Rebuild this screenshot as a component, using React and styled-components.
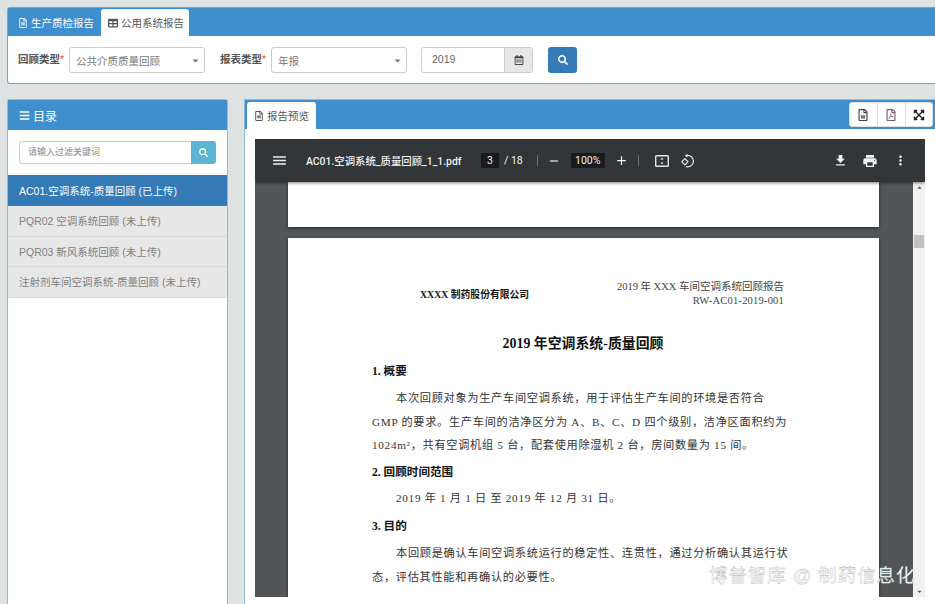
import styled, { createGlobalStyle } from "styled-components";
import {
  FaBars,
  FaExpandArrowsAlt,
  FaRegCalendarAlt,
  FaRegFileAlt,
  FaRegFilePdf,
  FaRegFileWord,
  FaSearch,
  FaTable,
  FaCaretDown,
  FaCaretUp,
} from "react-icons/fa";
import { MdAdd, MdFileDownload, MdMenu, MdMoreVert, MdPrint, MdRemove } from "react-icons/md";

const uiFont = `"Liberation Sans", "Noto Sans CJK SC", sans-serif`;
const docFont = `"Liberation Serif", "Noto Sans CJK SC", serif`;

const GlobalStyle = createGlobalStyle`
  html, body {
    margin: 0;
    height: 604px;
    overflow: hidden;
    background: #dfe2e2;
  }
  * { box-sizing: border-box; }
`;

const Page = styled.div`
  width: 935px;
  height: 604px;
  padding-top: 7px;
  display: flex;
  flex-direction: column;
  gap: 15px;
  font-family: ${uiFont};
  position: relative;
  overflow: hidden;
`;

const TopPanel = styled.section`
  margin-left: 7px;
  height: 77px;
  background: #fff;
  border: 1px solid #6fa8d8;
  border-right: 0;
  border-radius: 3px 0 0 3px;
  flex-shrink: 0;
`;

const TabBar = styled.div`
  background: #3f8fcf;
  height: ${(p) => p.$h || 28}px;
  flex-shrink: 0;
  display: flex;
  align-items: flex-end;
  padding-left: ${(p) => p.$pad || 0}px;
  position: relative;
`;

const Tab = styled.div`
  height: ${(p) => p.$h || 27}px;
  padding: 0 ${(p) => p.$pr}px 0 ${(p) => p.$pl}px;
  display: flex;
  align-items: center;
  gap: 3px;
  font-size: 10.5px;
  white-space: nowrap;
  border-radius: 3px 3px 0 0;
  color: ${(p) => (p.$active ? "#555" : "#fff")};
  background: ${(p) => (p.$active ? "#fff" : "transparent")};
  svg { font-size: 10px; color: ${(p) => (p.$active ? "#555" : "#e8f2fa")}; }
`;

const FilterRow = styled.div`
  display: flex;
  align-items: center;
  padding: 11px 0 0 10px;
`;

const Label = styled.label`
  width: 51px;
  margin-top: -3px;
  font-size: 10.5px;
  color: #555;
  font-weight: 700;
  white-space: nowrap;
  span { color: #d9534f; font-weight: 400; }
`;

const Select = styled.div`
  width: 136px;
  height: 26px;
  margin-right: 15px;
  padding: 0 4px 0 6px;
  display: flex;
  align-items: center;
  justify-content: space-between;
  font-size: 10.5px;
  color: #777;
  background: #fff;
  border: 1px solid #ccc;
  border-radius: 3px;
  svg { font-size: 9px; color: #777; }
`;

const DateGroup = styled.div`
  width: 112px;
  height: 26px;
  margin-left: -1px;
  margin-right: 15px;
  display: flex;
  border: 1px solid #ccc;
  border-radius: 3px;
  overflow: hidden;
`;

const DateValue = styled.div`
  flex: 1;
  padding-left: 10px;
  font-size: 10.5px;
  line-height: 23px;
  color: #666;
`;

const DateAddon = styled.div`
  width: 28px;
  display: flex;
  align-items: center;
  justify-content: center;
  background: #e6e6e6;
  border-left: 1px solid #ccc;
  color: #444;
  font-size: 10px;
`;

const SearchButton = styled.button`
  width: 29px;
  height: 26px;
  padding: 0;
  border: 0;
  border-radius: 3px;
  background: #337ab7;
  color: #fff;
  font-size: 10px;
  display: flex;
  align-items: center;
  justify-content: center;
`;

const Columns = styled.div`
  flex: 1;
  min-height: 0;
  display: flex;
  gap: 16px;
  padding-left: 7px;
`;

const Sidebar = styled.aside`
  width: 221px;
  flex-shrink: 0;
  background: #fff;
  border: 1px solid #8fbbdf;
  border-bottom: 0;
  border-radius: 3px 3px 0 0;
`;

const SideHeader = styled.div`
  height: 30px;
  padding-left: 11px;
  display: flex;
  align-items: center;
  gap: 3px;
  background: #3f8fcf;
  color: #fff;
  font-size: 12px;
  svg { font-size: 11px; }
`;

const FilterBox = styled.div`
  height: 45px;
  padding: 11px 11px 0;
  display: flex;
`;

const FilterInput = styled.div`
  flex: 1;
  height: 23px;
  padding-left: 8px;
  font-size: 9px;
  line-height: 21px;
  color: #888;
  border: 1px solid #ccc;
  border-right: 0;
  border-radius: 3px 0 0 3px;
`;

const FilterButton = styled.div`
  width: 25px;
  height: 23px;
  display: flex;
  align-items: center;
  justify-content: center;
  background: #5bb5d0;
  color: #fff;
  font-size: 9px;
  border-radius: 0 3px 3px 0;
`;

const Item = styled.div`
  height: ${(p) => (p.$active ? 31 : 30.5)}px;
  padding-left: 11px;
  display: flex;
  align-items: center;
  font-size: 10.5px;
  white-space: nowrap;
  color: ${(p) => (p.$active ? "#fff" : "#808080")};
  background: ${(p) => (p.$active ? "#337ab7" : "#e7e7e7")};
  border-bottom: 1px solid ${(p) => (p.$active ? "#337ab7" : "#d8d8d8")};
`;

const Preview = styled.main`
  flex: 1;
  min-width: 0;
  background: #fff;
  border-left: 1px solid #8fbbdf;
  border-top: 1px solid #8fbbdf;
  display: flex;
  flex-direction: column;
`;

const ButtonGroup = styled.div`
  position: absolute;
  right: 2px;
  top: 2px;
  display: flex;
  background: #fff;
  border-radius: 3px;
  border: 1px solid #ddd;
`;

const ToolButton = styled.div`
  width: 27.5px;
  height: 23px;
  display: flex;
  align-items: center;
  justify-content: center;
  font-size: 12px;
  color: ${(p) => p.$color || "#222"};
  & + & { border-left: 1px solid #ddd; }
`;

const Viewer = styled.div`
  margin: 10px 10px 0;
  height: 458px;
  display: flex;
  flex-direction: column;
  overflow: hidden;
`;

const PdfBar = styled.div`
  height: 43px;
  flex-shrink: 0;
  padding: 0 17px 0 16px;
  display: flex;
  align-items: center;
  background: #323639;
  color: #f1f1f1;
  box-shadow: 0 1px 3px rgba(0, 0, 0, 0.5);
  position: relative;
  z-index: 1;
  font-family: Roboto, "Noto Sans CJK SC", sans-serif;
  font-size: 10.5px;
  svg { display: block; flex-shrink: 0; }
`;

const FileName = styled.div`
  width: 175px;
  margin-left: 18px;
  font-size: 10.4px;
  font-weight: 500;
  white-space: nowrap;
`;

const NumBox = styled.div`
  width: ${(p) => p.$w}px;
  height: 15px;
  margin: 0 ${(p) => p.$mr || 0}px 0 ${(p) => p.$ml || 0}px;
  line-height: 15px;
  text-align: center;
  background: #191b1c;
`;

const PageTotal = styled.span`
  margin-left: 5px;
  white-space: nowrap;
`;

const Sep = styled.div`
  width: 1px;
  height: 11px;
  margin: 0 ${(p) => p.$mr}px 0 ${(p) => p.$ml}px;
  background: #6b6e70;
`;

const Gap = styled.div`
  width: ${(p) => p.$w}px;
  flex-shrink: 0;
`;

const Spacer = styled.div`
  flex: 1;
`;

const PdfBody = styled.div`
  flex: 1;
  min-height: 0;
  display: flex;
`;

const PageArea = styled.div`
  flex: 1;
  min-width: 0;
  padding-right: 1px;
  background: #525659;
  overflow: hidden;
  display: flex;
  flex-direction: column;
  align-items: center;
  gap: 11px;
`;

const Sheet = styled.div`
  width: 591px;
  flex-shrink: 0;
  height: ${(p) => p.$h}px;
  background: #fff;
  box-shadow: 0 1px 3px rgba(0, 0, 0, 0.5);
  padding: ${(p) => (p.$doc ? "42px 95px 0 84px" : 0)};
  font-family: ${docFont};
  color: #222;
`;

const DocHead = styled.div`
  display: flex;
  justify-content: space-between;
  align-items: center;
`;

const Company = styled.div`
  margin-left: 48px;
  font-size: 9.8px;
  font-weight: 700;
  color: #111;
`;

const DocMeta = styled.div`
  text-align: right;
  font-size: 10.5px;
  line-height: 14px;
  color: #444;
`;

const DocCode = styled.span`
  letter-spacing: 0.2px;
`;

const DocTitle = styled.h1`
  margin: 27px 0 0 10px;
  height: 18px;
  text-align: center;
  font-size: 13.9px;
  line-height: 18px;
  color: #111;
`;

const Heading = styled.h2`
  margin: ${(p) => p.$mt}px 0 0;
  font-size: 11.6px;
  line-height: 16px;
  color: #111;
`;

const DocLine = styled.div`
  margin-top: ${(p) => p.$mt || 0}px;
  padding-left: ${(p) => (p.$indent ? 24 : 0)}px;
  height: 23.5px;
  font-size: 11.2px;
  line-height: 23.5px;
  letter-spacing: 0.7px;
  white-space: nowrap;
  color: #333;
`;

const Scrollbar = styled.div`
  width: 12px;
  flex-shrink: 0;
  background: #f1f1f1;
  display: flex;
  flex-direction: column;
  align-items: center;
  justify-content: space-between;
  position: relative;
  padding: 2px 0;
  color: #555;
  font-size: 7px;
`;

const Thumb = styled.div`
  position: absolute;
  top: 53px;
  left: 1px;
  width: 10px;
  height: 13px;
  background: #c1c1c1;
`;

const Watermark = styled.div`
  position: absolute;
  left: 709px;
  top: 564px;
  font-size: 18.5px;
  line-height: 24px;
  letter-spacing: 0.9px;
  color: #fff;
  white-space: nowrap;
  -webkit-text-stroke: 0.3px #a6a6a6;
`;

const FitIcon = () => (
  <svg width="14" height="12" viewBox="0 0 14 12" fill="none">
    <rect x="0.7" y="0.7" width="12.6" height="10.6" rx="0.8" stroke="#e4e4e4" strokeWidth="1.4" />
    <path d="M7 2.6 8.6 4.6H5.4zM7 9.4 8.6 7.4H5.4z" fill="#e4e4e4" />
  </svg>
);

const RotateIcon = () => (
  <svg width="14" height="14" viewBox="0 0 14 14" fill="none" stroke="#e8e8e8" strokeWidth="1.2">
    <path d="M5.5 1.6A5.7 5.7 0 1 1 5 12.6" />
    <path d="M6.4 0 3.8 1.8 6.4 3.6" fill="#e8e8e8" stroke="none" />
    <path d="M3.9 4.7 7 7.8 3.9 10.9 0.8 7.8z" />
  </svg>
);

export default function App() {
  return (
    <>
      <GlobalStyle />
      <Page>
        <TopPanel>
          <TabBar>
            <Tab $pl={10} $pr={7}>
              <FaRegFileAlt />
              生产质检报告
            </Tab>
            <Tab $active $pl={7} $pr={5}>
              <FaTable />
              公用系统报告
            </Tab>
          </TabBar>
          <FilterRow>
            <Label>
              回顾类型<span>*</span>
            </Label>
            <Select>
              公共介质质量回顾
              <FaCaretDown />
            </Select>
            <Label>
              报表类型<span>*</span>
            </Label>
            <Select>
              年报
              <FaCaretDown />
            </Select>
            <DateGroup>
              <DateValue>2019</DateValue>
              <DateAddon>
                <FaRegCalendarAlt />
              </DateAddon>
            </DateGroup>
            <SearchButton>
              <FaSearch />
            </SearchButton>
          </FilterRow>
        </TopPanel>

        <Columns>
          <Sidebar>
            <SideHeader>
              <FaBars />
              目录
            </SideHeader>
            <FilterBox>
              <FilterInput>请输入过滤关键词</FilterInput>
              <FilterButton>
                <FaSearch />
              </FilterButton>
            </FilterBox>
            <Item $active>AC01.空调系统-质量回顾 (已上传)</Item>
            <Item>PQR02 空调系统回顾 (未上传)</Item>
            <Item>PQR03 新风系统回顾 (未上传)</Item>
            <Item>注射剂车间空调系统-质量回顾 (未上传)</Item>
          </Sidebar>

          <Preview>
            <TabBar $pad={2} $h={29}>
              <Tab $active $pl={7} $pr={7}>
                <FaRegFileAlt />
                报告预览
              </Tab>
              <ButtonGroup>
                <ToolButton $color="#444">
                  <FaRegFileWord />
                </ToolButton>
                <ToolButton $color="#7a5a70">
                  <FaRegFilePdf />
                </ToolButton>
                <ToolButton>
                  <FaExpandArrowsAlt />
                </ToolButton>
              </ButtonGroup>
            </TabBar>

            <Viewer>
              <PdfBar>
                <MdMenu size={17} />
                <FileName>AC01.空调系统_质量回顾_1_1.pdf</FileName>
                <NumBox $w={18}>3</NumBox>
                <PageTotal>/ 18</PageTotal>
                <Sep $ml={14} $mr={9} />
                <MdRemove size={14} />
                <NumBox $w={34} $ml={10} $mr={9}>100%</NumBox>
                <MdAdd size={15} />
                <Sep $ml={9} $mr={16} />
                <FitIcon />
                <Gap $w={12} />
                <RotateIcon />
                <Spacer />
                <MdFileDownload size={15} />
                <Gap $w={14} />
                <MdPrint size={16} />
                <Gap $w={15} />
                <MdMoreVert size={15} />
              </PdfBar>
              <PdfBody>
                <PageArea>
                  <Sheet $h={45} />
                  <Sheet $h={800} $doc>
                    <DocHead>
                      <Company>XXXX 制药股份有限公司</Company>
                      <DocMeta>
                        2019 年 XXX 车间空调系统回顾报告
                        <br />
                        <DocCode>RW-AC01-2019-001</DocCode>
                      </DocMeta>
                    </DocHead>
                    <DocTitle>2019 年空调系统-质量回顾</DocTitle>
                    <Heading $mt={11}>1. 概要</Heading>
                    <DocLine $indent $mt={7}>本次回顾对象为生产车间空调系统，用于评估生产车间的环境是否符合</DocLine>
                    <DocLine>GMP 的要求。生产车间的洁净区分为 A、B、C、D 四个级别，洁净区面积约为</DocLine>
                    <DocLine>1024m²，共有空调机组 5 台，配套使用除湿机 2 台，房间数量为 15 间。</DocLine>
                    <Heading $mt={7}>2. 回顾时间范围</Heading>
                    <DocLine $indent $mt={6}>2019 年 1 月 1 日 至 2019 年 12 月 31 日。</DocLine>
                    <Heading $mt={9}>3. 目的</Heading>
                    <DocLine $indent $mt={7}>本回顾是确认车间空调系统运行的稳定性、连贯性，通过分析确认其运行状</DocLine>
                    <DocLine>态，评估其性能和再确认的必要性。</DocLine>
                  </Sheet>
                </PageArea>
                <Scrollbar>
                  <FaCaretUp />
                  <Thumb />
                  <FaCaretDown />
                </Scrollbar>
              </PdfBody>
            </Viewer>
          </Preview>
        </Columns>
        <Watermark>博普智库 @ 制药信息化</Watermark>
      </Page>
    </>
  );
}
